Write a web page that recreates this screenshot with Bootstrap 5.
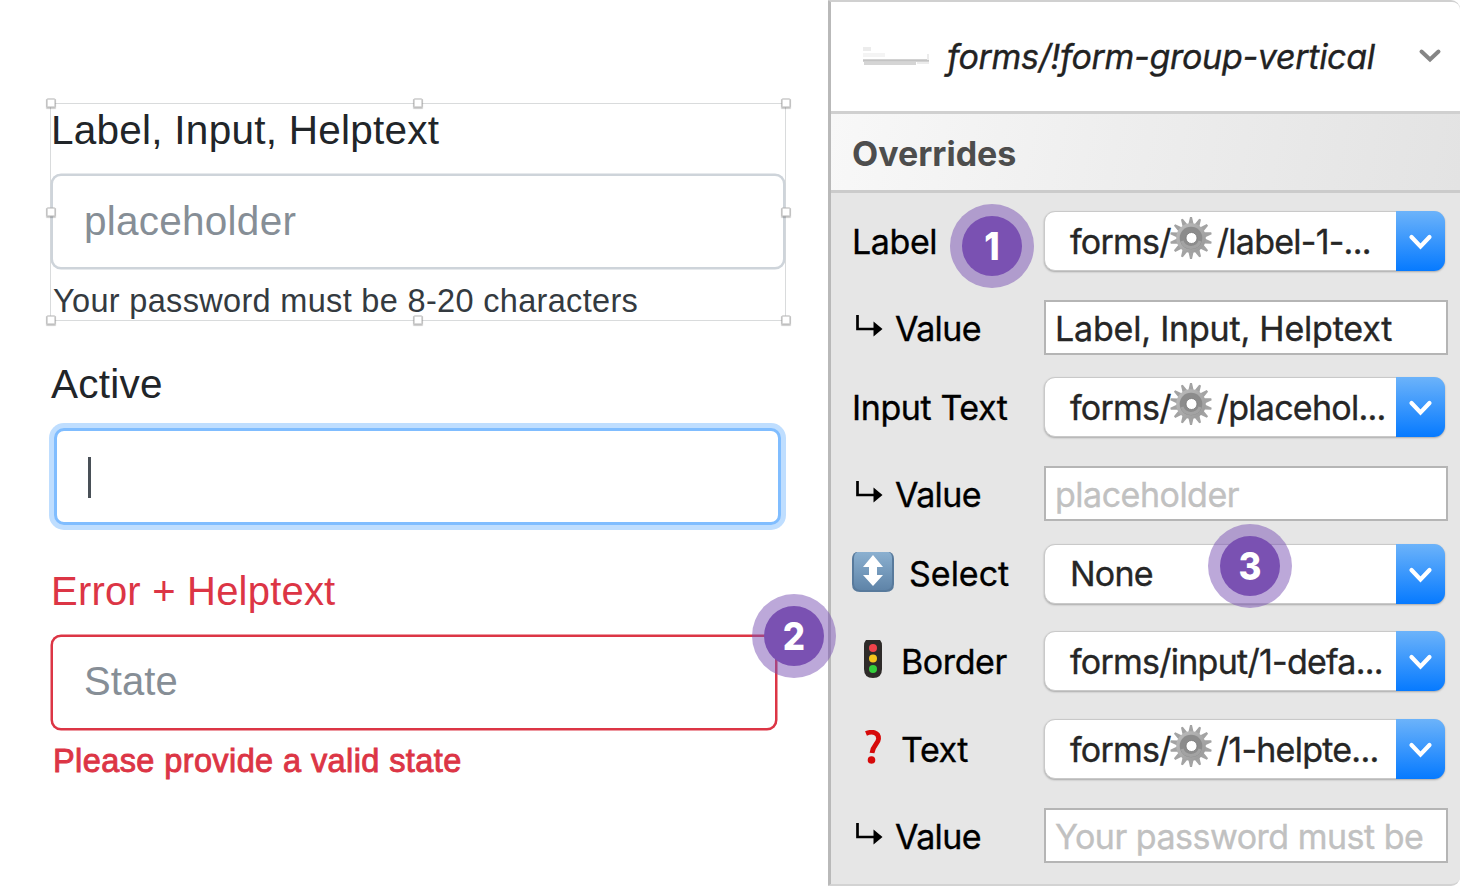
<!DOCTYPE html>
<html lang="en">
<head>
<meta charset="utf-8">
<title>Form overrides</title>
<link href="https://cdn.jsdelivr.net/npm/bootstrap@5.3.0/dist/css/bootstrap.min.css" rel="stylesheet">
<script src="https://cdn.jsdelivr.net/npm/bootstrap@5.3.0/dist/js/bootstrap.bundle.min.js"></script>
<style>
body{width:1460px;height:886px;overflow:hidden;background:#fff;font-family:"Liberation Sans",sans-serif}
.canvas{width:828px;padding:103px 0 0 50px}
.txt{white-space:nowrap;display:block;margin:0}
.f-label{font-size:40.5px;line-height:48px;color:#212529;letter-spacing:.25px}
.f-help{font-size:32.5px;line-height:36px;color:#343a40;letter-spacing:.32px}
.field{border:2px solid #ced4da;box-shadow:0 0 0 .5px #ced4da;border-radius:10px;height:95px;width:734px;padding:0 0 0 31px;font-size:40.5px;line-height:90px;color:#868e96;background:#fff;letter-spacing:.25px}
.group-one{width:736px;height:218px;border:1px solid #d9dbdc;padding-top:2px}
.knob{position:absolute;width:9px;height:9px;margin-top:-1px;background:#fff;border:1px solid #b4b4b4;border-radius:1px;box-shadow:0 1px 1px #0003;transform:translate(-50%,-50%)}
.field-active{margin-left:3px;width:727px;height:97px;border:3px solid #80bdff;box-shadow:0 0 0 5px #bfdeff}
.caret{width:3px;height:41px;margin-top:2px;background:#495057}
.field-error{width:726px;border-color:#dc3545;box-shadow:0 0 0 .5px #dc3545;font-size:40px;line-height:89px;letter-spacing:.1px}
.err{color:#dc3545}
.f-label.err{font-size:40px;letter-spacing:.2px}
.f-feedback{font-size:32.5px;line-height:36px;letter-spacing:.4px;-webkit-text-stroke:.9px #dc3545}
.inspector{width:632px;height:886px;border-left:3px solid #b9b9b9;border-top:2px solid #d0d0d0;border-bottom:2px solid #d3d3d3;border-radius:0 9px 9px 0;background:#e6e6e6;font-family:Inter,sans-serif;font-size:34px;color:#000;-webkit-text-stroke:.35px}
.head{height:112px;background:#fff;border-bottom:3px solid #d0d0d0;border-top-right-radius:8px;padding:0 18px 0 31px}
.head-title{font-style:italic;color:#222;line-height:111px;margin-left:17px;letter-spacing:-.3px}
.bar{height:79px;border-bottom:3px solid #cbcbcb;background:linear-gradient(100deg,#f8f8f8,#eee 45%,#e3e3e3);color:#4d4d4d;font-weight:700;line-height:79px;padding-left:21px;-webkit-text-stroke:0}
.rows{padding:18px 12px 0 21px}
.r{display:flex;height:60px}
.r .lab{width:192px;line-height:62px;position:relative;display:flex;white-space:nowrap;letter-spacing:-.4px}
.r.v{height:55px}
.r.v .lab{line-height:58px;letter-spacing:-.6px}
.pick{width:401px;height:60px;border-radius:11px;background:#fff;border:1px solid #c9c9c9;box-shadow:0 1px 2px #0004;display:flex;position:relative;color:#262626;line-height:60px;letter-spacing:-.75px}
.pick>.txt{width:351px;padding-left:25px}
.r.mid .lab{line-height:60px;letter-spacing:0}
.r.mid .pick{line-height:58px}
.go{flex:none;width:49px;height:60px;margin:-1px -1px 0 0;background:linear-gradient(#6cb3fa,#067aff);border-radius:0 11px 11px 0}
.val{width:404px;height:55px;border:2px solid #b5b5b5;background:#fff;padding-left:9px;line-height:54px;color:#262626;overflow:hidden;letter-spacing:-.2px}
.val.ph{color:#c1c1c1;letter-spacing:-.5px}
.gear{width:42px;height:44px;margin:-14px 5px 0 -1px;vertical-align:middle}
.hook{width:32px;height:24px;margin:14px 11px 0 1px}
.hook+span{margin-left:-1px}
.pin{position:absolute;z-index:5;width:84px;height:84px;border-radius:50%;background:#7a52b380;display:flex;align-items:center;justify-content:center}
.pin b{width:60px;height:60px;border-radius:50%;background:#7a51b2;color:#fff;font:800 38px/60px Inter,sans-serif;letter-spacing:0;text-align:center;-webkit-text-stroke:0}
.pin b span{display:block;transform:scaleX(.92)}
</style>
</head>
<body class="d-flex">
<svg width="0" height="0" class="position-absolute">
<defs>
<linearGradient id="gg" x1="0" y1="0" x2="1" y2="1"><stop offset="0" stop-color="#bdbdbd"/><stop offset="1" stop-color="#979797"/></linearGradient>
<linearGradient id="bl" x1="0" y1="0" x2="0" y2="1"><stop offset="0" stop-color="#8bb0d0"/><stop offset="1" stop-color="#5f84a8"/></linearGradient>
<symbol id="gear" viewBox="0 0 42 44">
<g fill="#a3a3a3">
<path id="t1" d="M18.200 9 20 1h2l1.800 8zM18.200 35l1.800 8h2l1.800-8z"/>
<use href="#t1" transform="rotate(25.700 21 22)"/><use href="#t1" transform="rotate(51.400 21 22)"/><use href="#t1" transform="rotate(77.100 21 22)"/><use href="#t1" transform="rotate(102.800 21 22)"/><use href="#t1" transform="rotate(128.500 21 22)"/><use href="#t1" transform="rotate(154.200 21 22)"/></g>
<circle cx="21" cy="22" r="14.800" fill="url(#gg)"/>
<circle cx="21" cy="22" r="11.300" fill="#8c8c8c"/><path d="M12 25a9.500 9.500 0 0 0 18 0" fill="none" stroke="#a3a3a3" stroke-width="3"/><circle cx="21.500" cy="22" r="5.500" fill="#fff" stroke="#777" stroke-width=".8"/>
</symbol>
<symbol id="chev" viewBox="0 0 49 60"><path d="m15.500 26 9 9.500 9-9.500" fill="none" stroke="#fff" stroke-width="4.200" stroke-linecap="round" stroke-linejoin="miter"/></symbol>
<symbol id="hook" viewBox="0 0 32 24"><path d="M4.500 1v14H22" fill="none" stroke="#000" stroke-width="2.700"/><path d="m20.500 7.500 9 7.500-9 7.500z"/></symbol>
</defs></svg>

<main class="canvas flex-shrink-0">
  <section class="group-one position-relative">
    <label class="txt f-label">Label, Input, Helptext</label>
    <div class="field" style="margin-top:20px">placeholder</div>
    <span class="txt f-help" style="margin:14px 0 0 2px">Your password must be 8-20 characters</span>
    <i class="knob" style="left:0;top:0"></i><i class="knob" style="left:50%;top:0"></i><i class="knob" style="left:calc(100% + 1px);top:0"></i>
    <i class="knob" style="left:0;top:calc(50% + 1px)"></i><i class="knob" style="left:calc(100% + 1px);top:calc(50% + 1px)"></i>
    <i class="knob" style="left:0;top:calc(100% + 1px)"></i><i class="knob" style="left:50%;top:calc(100% + 1px)"></i><i class="knob" style="left:calc(100% + 1px);top:calc(100% + 1px)"></i>
  </section>
  <section style="margin-top:39px;padding-left:1px">
    <label class="txt f-label">Active</label>
    <div class="field field-active d-flex align-items-center" style="margin-top:20px"><span class="caret"></span></div>
  </section>
  <section style="margin-top:42px;padding-left:1px">
    <label class="txt f-label err">Error + Helptext</label>
    <div class="field field-error position-relative" style="margin-top:20px">State<span class="pin" style="left:699px;top:-43px"><b><span>2</span></b></span></div>
    <span class="txt f-feedback err" style="margin:13px 0 0 2px">Please provide a valid state</span>
  </section>
</main>

<aside class="inspector flex-shrink-0">
  <header class="head d-flex align-items-center">
    <svg width="68" height="26" viewBox="0 0 68 26"><path d="M1 3h8v4H1z" fill="#ececec"/><path d="M1 9h22v4H1z" fill="#f4f4f4"/><path d="M1 16.500h66" stroke="#c3c3c3" stroke-width="2.500"/><path d="M2 19.500h52" stroke="#d5d5d5" stroke-width="3"/><path d="M55 19h12" stroke="#ececec" stroke-width="2"/><path d="M66 10v6" stroke="#ececec" stroke-width="2"/></svg>
    <span class="txt head-title">forms/!form-group-vertical</span>
    <svg class="ms-auto" width="24" height="18" viewBox="0 0 24 18"><path d="m3.500 3.500 8.500 8 8.500-8" fill="none" stroke="#858585" stroke-width="4" stroke-linecap="round"/></svg>
  </header>
  <div class="bar txt">Overrides</div>
  <div class="rows">
    <div class="r"><div class="lab"><span>Label</span><span class="pin" style="left:98px;top:-7px"><b><span>1</span></b></span></div>
      <div class="pick"><span class="txt">forms/<svg class="gear"><use href="#gear"/></svg>/label-1-...</span><svg class="go"><use href="#chev"/></svg></div></div>
    <div class="r v" style="margin-top:29px"><div class="lab"><svg class="hook"><use href="#hook"/></svg><span>Value</span></div>
      <div class="val txt">Label, Input, Helptext</div></div>
    <div class="r" style="margin-top:22px"><div class="lab"><span>Input Text</span></div>
      <div class="pick"><span class="txt">forms/<svg class="gear"><use href="#gear"/></svg>/placehol...</span><svg class="go"><use href="#chev"/></svg></div></div>
    <div class="r v" style="margin-top:29px"><div class="lab"><svg class="hook"><use href="#hook"/></svg><span>Value</span></div>
      <div class="val txt ph">placeholder</div></div>
    <div class="r mid" style="margin-top:23px"><div class="lab"><svg width="42" height="40" viewBox="0 0 42 40" style="margin:8px 15px 0 0"><path d="M4 0h34q4 2 4 7v25q0 8-8 8H8q-8 0-8-8V7q0-5 4-7z" fill="#587a9c"/><path d="M5 0h32q3 2 3 6v25q0 7-7 7H9q-7 0-7-7V6q0-4 3-6z" fill="url(#bl)"/><path d="m21 3 10 12h-6v8h6L21 34 11 23h6v-8h-6z" fill="#fff"/></svg><span>Select</span></div>
      <div class="pick"><span class="txt">None</span><svg class="go"><use href="#chev"/></svg><span class="pin" style="left:163px;top:-21px"><b><span>3</span></b></span></div></div>
    <div class="r" style="margin-top:27px"><div class="lab"><svg width="20" height="38" viewBox="0 0 20 38" style="margin:9px 18px 0 11px"><path d="M3 0h14q2 2 2 6v23q0 9-9 9t-9-9V6q0-4 2-6z" fill="#2e2b29"/><circle cx="10" cy="8" r="4" fill="#f0434b"/><circle cx="10" cy="18.500" r="4" fill="#f5c51c"/><circle cx="10" cy="29" r="4" fill="#33cf3b"/></svg><span>Border</span></div>
      <div class="pick"><span class="txt">forms/input/1-defa...</span><svg class="go"><use href="#chev"/></svg></div></div>
    <div class="r" style="margin-top:28px"><div class="lab"><svg width="20" height="34" viewBox="0 0 20 34" style="margin:11px 18px 0 11px"><path d="M3 3.500C9 1 16 2 15.500 9c-.3 5-5.500 6-6.500 14" fill="none" stroke="#d60a0a" stroke-width="4.800"/><circle cx="8.500" cy="30" r="3.800" fill="#d60a0a"/></svg><span>Text</span></div>
      <div class="pick"><span class="txt">forms/<svg class="gear"><use href="#gear"/></svg>/1-helpte...</span><svg class="go"><use href="#chev"/></svg></div></div>
    <div class="r v" style="margin-top:29px"><div class="lab"><svg class="hook"><use href="#hook"/></svg><span>Value</span></div>
      <div class="val txt ph">Your password must be</div></div>
  </div>
</aside>
</body>
</html>
